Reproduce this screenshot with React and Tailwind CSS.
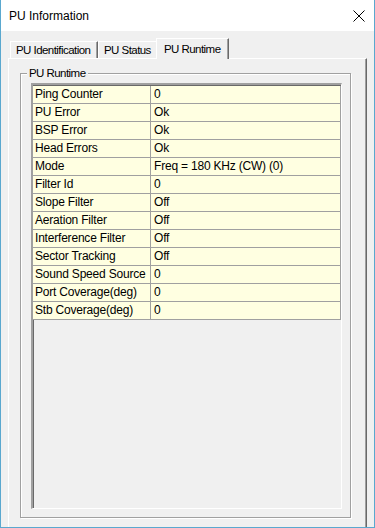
const rows = [
    ["Ping Counter", "0"],
    ["PU Error", "Ok"],
    ["BSP Error", "Ok"],
    ["Head Errors", "Ok"],
    ["Mode", "Freq = 180 KHz (CW) (0)"],
    ["Filter Id", "0"],
    ["Slope Filter", "Off"],
    ["Aeration Filter", "Off"],
    ["Interference Filter", "Off"],
    ["Sector Tracking", "Off"],
    ["Sound Speed Source", "0"],
    ["Port Coverage(deg)", "0"],
    ["Stb Coverage(deg)", "0"],
];

function Tab({ label, width, active }) {
    if (active)
        return (
            <div className={"relative z-10 -ml-[2px] mb-[-1px] h-[21px] pl-[7px] pt-[2px] whitespace-nowrap bg-[#f0f0f0] border-l border-t border-white border-r border-r-[#696969] shadow-[inset_-1px_0_0_#a0a0a0] " + width}>
                {label}
            </div>
        );
    return (
        <div className={"h-[17px] pl-[5px] whitespace-nowrap bg-[#f0f0f0] border-l border-t border-white border-r border-r-[#696969] shadow-[inset_-1px_0_0_#a0a0a0] " + width}>
            {label}
        </div>
    );
}

export default function App() {
    return (
        <div className="w-[375px] h-[528px] overflow-hidden flex flex-col bg-[#f0f0f0] border-l border-r border-b border-[#5aa8cf] font-['Liberation_Sans',Arial,sans-serif] text-black">
            <header className="h-[31px] shrink-0 bg-white flex items-center justify-between pl-[8px] pr-[9px] text-[12px]">
                <span>PU Information</span>
                <svg width="12" height="12" viewBox="0 0 12 12" className="mt-[1px]">
                    <path d="M0.5 0.5 L11.5 11.5 M11.5 0.5 L0.5 11.5" stroke="#000" strokeWidth="1" />
                </svg>
            </header>
            <main className="flex-1 flex flex-col pl-[7px] pr-[7px] pt-[7px] text-[11.5px] tracking-[-0.55px]">
                <div className="flex items-end h-[20px] pl-[2px]">
                    <Tab label="PU Identification" width="w-[88px]" />
                    <Tab label="PU Status" width="w-[60px]" />
                    <Tab label="PU Runtime" width="w-[73px]" active />
                </div>
                <section className="flex-1 flex flex-col border-l border-t border-white border-r border-r-[#696969] shadow-[inset_-1px_0_0_#a0a0a0] pl-[11px] pr-[15px] pt-[14px] pb-[9px]">
                    <div className="relative flex-1 flex flex-col border border-[#a0a0a0] shadow-[inset_1px_1px_0_#fff,1px_1px_0_#fff] pl-[10px] pr-[8px] pt-[9px] pb-[8px]">
                        <span className="absolute -top-[8px] left-[6px] bg-[#f0f0f0] px-[2px] leading-[14px]">PU Runtime</span>
                        <div className="flex-1 border-l-2 border-t-2 border-l-[#a0a0a0] border-t-[#a0a0a0] border-r border-b border-r-white border-b-white shadow-[inset_1px_1px_0_#696969] pt-[1px] text-[12px] tracking-[-0.2px]">
                            {rows.map(([k, v]) => (
                                <div key={k} className="grid grid-cols-[118px_1fr] h-[18px] bg-[#ffffe1] border-b border-[#a0a0a0]">
                                    <div className="border-r border-[#a0a0a0] pl-[2px] leading-[17px]">{k}</div>
                                    <div className="border-r border-[#a0a0a0] pl-[3px] leading-[17px]">{v}</div>
                                </div>
                            ))}
                        </div>
                    </div>
                </section>
            </main>
        </div>
    );
}
